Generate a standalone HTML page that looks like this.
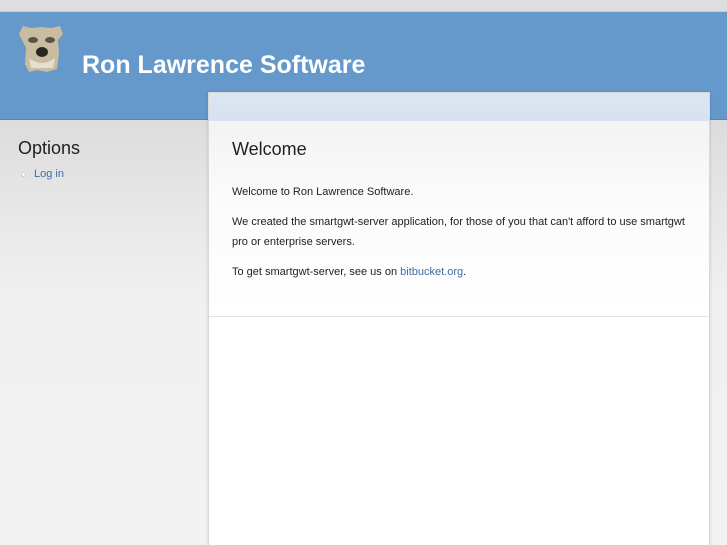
<!DOCTYPE html>
<html><head><style>
*{margin:0;padding:0;box-sizing:border-box}
html,body{width:727px;height:545px;overflow:hidden}
body{position:relative;font-family:"Liberation Sans",sans-serif;background:linear-gradient(#dcdcdc 120px,#e6e6e6 200px,#f0f0f0 300px,#f2f2f2)}
.top{position:absolute;left:0;top:0;width:727px;height:12px;background:#dedede;border-bottom:1px solid #c8c8c8}
.hdr{position:absolute;left:0;top:12px;width:727px;height:108px;background:#6598cb;border-bottom:1px solid #5a86b4}
.title{position:absolute;left:82px;top:51px;color:#fff;font-weight:bold;font-size:25px}
.panel{position:absolute;left:208px;top:92px;width:502px;height:460px;background:#fff;border:1px solid #d8d8d8;box-shadow:0 0 3px rgba(0,0,0,.15)}
.ptop{height:28px;background:linear-gradient(#dce6f2,#d6e2ef)}
.pbody{height:196px;background:linear-gradient(#f3f3f3,#fbfbfb 80px,#fff);border-bottom:1px solid #e4e4e4;padding:18px 23px}
h2{font-weight:normal;font-size:18px;color:#222;margin-bottom:22px}
p{font-size:11px;color:#222;line-height:20px;margin-bottom:10px}
a{color:#3d6ea8;text-decoration:none}
.opt{position:absolute;left:18px;top:138px;font-size:18px;color:#222}
.li{position:absolute;left:21px;top:168px;font-size:11px}
.li span{display:inline-block;width:5px;height:5px;border-radius:50%;background:#fff;border:1px solid #ccc;margin-right:8px;vertical-align:middle}
</style></head><body>
<div class="top"></div>
<div class="hdr"></div>
<svg style="position:absolute;left:17px;top:24px" width="48" height="50" viewBox="0 0 48 50">
<path d="M6 2 L14 4 L24 3 L34 4 L43 2 L46 10 L41 16 L42 30 L40 45 L30 48 L20 46 L12 48 L8 40 L9 24 L5 16 L2 10Z" fill="#c9bca0"/>
<ellipse cx="16" cy="16" rx="5" ry="3" fill="#5a5348"/>
<ellipse cx="33" cy="16" rx="5" ry="3" fill="#5a5348"/>
<ellipse cx="25" cy="28" rx="6" ry="5" fill="#2a2520"/>
<path d="M12 34 Q25 44 38 34 L36 44 L14 44Z" fill="#e6dfcf"/>
</svg>
<div class="title">Ron Lawrence Software</div>
<div class="opt">Options</div>
<div class="li"><span></span><a>Log in</a></div>
<div class="panel">
<div class="ptop"></div>
<div class="pbody">
<h2>Welcome</h2>
<p>Welcome to Ron Lawrence Software.</p>
<p>We created the smartgwt-server application, for those of you that can't afford to use smartgwt pro or enterprise servers.</p>
<p>To get smartgwt-server, see us on <a>bitbucket.org</a>.</p>
</div>
</div>
</body></html>
